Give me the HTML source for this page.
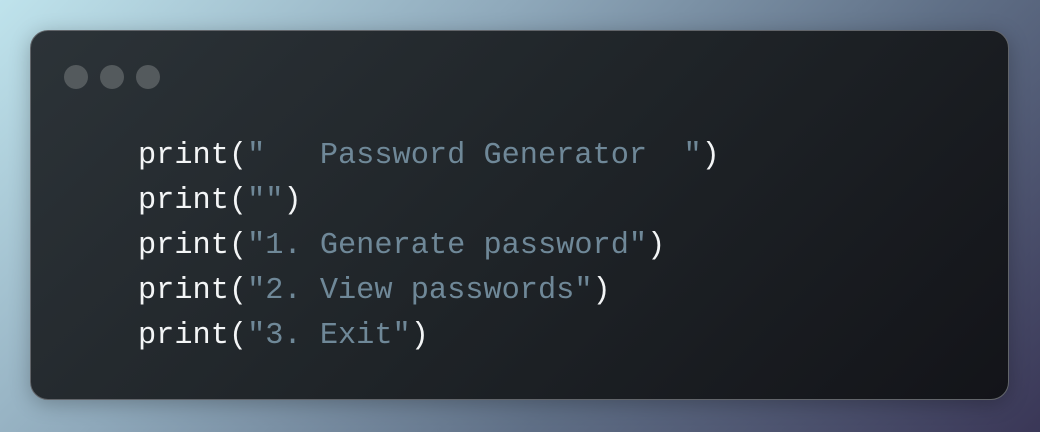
<!DOCTYPE html>
<html><head><style>
html,body{margin:0;padding:0;width:1040px;height:432px;overflow:hidden;}
body{background:linear-gradient(135deg,#bfe3ec 0%,#8fa9bb 35%,#5f6f86 65%,#3a3757 100%);position:relative;}
.win{position:absolute;left:30px;top:30px;width:977px;height:368px;border:1.5px solid #62656a;border-radius:18px;background:linear-gradient(135deg,#2c3338 0%,#1f2428 50%,#131419 100%);box-shadow:0 4px 20px rgba(0,0,0,.25);}
.dot{position:absolute;top:34px;width:24px;height:24px;border-radius:50%;background:#545a5d;}
pre{position:absolute;left:107px;top:103px;margin:0;font-family:"Liberation Mono",monospace;font-size:30.3px;line-height:45px;color:#f3f5f6;}
.s{color:#6f8898;}
</style></head><body>
<div class="win">
<div class="dot" style="left:33px"></div>
<div class="dot" style="left:69px"></div>
<div class="dot" style="left:105px"></div>
<pre>print(<span class="s">"   Password Generator  "</span>)
print(<span class="s">""</span>)
print(<span class="s">"1. Generate password"</span>)
print(<span class="s">"2. View passwords"</span>)
print(<span class="s">"3. Exit"</span>)</pre>
</div>
</body></html>
